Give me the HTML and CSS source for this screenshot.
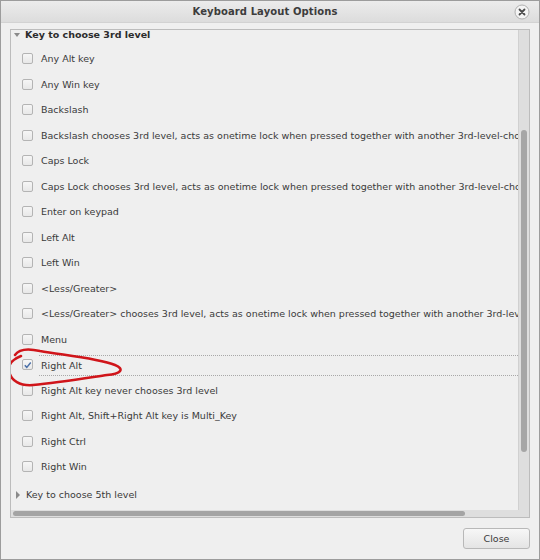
FILE: index.html
```html
<!DOCTYPE html>
<html>
<head>
<meta charset="utf-8">
<link rel="stylesheet" href="styles.css">
</head>
<body>
<div class="window">
  <div class="titlebar">
    <span class="title">Keyboard Layout Options</span>
    <span class="close-btn">
      <svg width="16" height="16" viewBox="0 0 16 16">
        <circle cx="8" cy="8" r="7" fill="#f4f4f4" stroke="#b0b0b0" stroke-width="1"/>
        <path d="M5.5 5.5 L10.5 10.5 M10.5 5.5 L5.5 10.5" stroke="#4a4a4a" stroke-width="1.8" stroke-linecap="round"/>
      </svg>
    </span>
  </div>
  <div class="body">
    <div class="frame">
      <div class="viewport">
        <div class="list">
          <div class="group-row first"><span class="tri-down"></span><span class="group-label">Key to choose 3rd level</span></div>
          <div class="row"><span class="cb"></span><span>Any Alt key</span></div>
          <div class="row"><span class="cb"></span><span>Any Win key</span></div>
          <div class="row"><span class="cb"></span><span>Backslash</span></div>
          <div class="row"><span class="cb"></span><span>Backslash chooses 3rd level, acts as onetime lock when pressed together with another 3rd-level-chooser</span></div>
          <div class="row"><span class="cb"></span><span>Caps Lock</span></div>
          <div class="row"><span class="cb"></span><span>Caps Lock chooses 3rd level, acts as onetime lock when pressed together with another 3rd-level-chooser</span></div>
          <div class="row"><span class="cb"></span><span>Enter on keypad</span></div>
          <div class="row"><span class="cb"></span><span>Left Alt</span></div>
          <div class="row"><span class="cb"></span><span>Left Win</span></div>
          <div class="row"><span class="cb"></span><span>&lt;Less/Greater&gt;</span></div>
          <div class="row"><span class="cb"></span><span>&lt;Less/Greater&gt; chooses 3rd level, acts as onetime lock when pressed together with another 3rd-level-chooser</span></div>
          <div class="row"><span class="cb"></span><span>Menu</span></div>
          <div class="row focused"><span class="cb checked"><svg width="10" height="10" viewBox="0 0 10 10"><path d="M2 5.2 L4.2 7.6 L8.6 2.2" fill="none" stroke="#4a6fa8" stroke-width="1.6"/></svg></span><span class="focus-label">Right Alt</span></div>
          <div class="row"><span class="cb"></span><span>Right Alt key never chooses 3rd level</span></div>
          <div class="row"><span class="cb"></span><span>Right Alt, Shift+Right Alt key is Multi_Key</span></div>
          <div class="row"><span class="cb"></span><span>Right Ctrl</span></div>
          <div class="row"><span class="cb"></span><span>Right Win</span></div>
          <div class="group-row collapsed"><span class="tri-right"></span><span class="group-label normal">Key to choose 5th level</span></div>
          <div class="group-row collapsed last"><span class="tri-right"></span><span class="group-label normal">Miscellaneous compatibility options</span></div>
        </div>
        <svg class="annot" width="130" height="44" viewBox="0 0 130 44">
          <path d="M8 9 C 12 3, 20 2, 33 5 C 55 9, 90 12, 108 19 C 118 23, 114 28, 100 29 C 80 32, 50 37, 26 39 C 13 40, 4 35, 2 25 C 1 18, 6 13, 14 10" fill="none" stroke="#d0151a" stroke-width="2.5" stroke-linecap="round"/>
        </svg>
      </div>
      <div class="vscroll"><div class="vthumb"></div></div>
      <div class="hscroll"><div class="hthumb"></div></div>
      <div class="corner"></div>
    </div>
    <div class="buttons">
      <button class="btn">Close</button>
    </div>
  </div>
</div>
</body>
</html>
```
FILE: styles.css
```css
html, body {
  margin: 0;
  padding: 0;
  background: #efefef;
}
.window {
  width: 540px;
  height: 560px;
  box-sizing: border-box;
  border: 1px solid #9c9c9c;
  background: #efefef;
  font-family: "DejaVu Sans", sans-serif;
  font-size: 9.5px;
  color: #3a3a3a;
  display: flex;
  flex-direction: column;
  overflow: hidden;
}
.titlebar {
  height: 21px;
  flex: none;
  background: linear-gradient(#ececec, #dcdcdc);
  border-bottom: 1px solid #d2d2d2;
  display: flex;
  align-items: center;
  justify-content: center;
  position: relative;
}
.title {
  font-weight: bold;
  font-size: 10px;
  color: #3c3c3c;
  letter-spacing: 0.1px;
  margin-right: 10px;
}
.close-btn {
  position: absolute;
  right: 9px;
  top: 3px;
  width: 16px;
  height: 16px;
}
.body {
  flex: 1;
  padding: 6px 9px 0 9px;
  display: flex;
  flex-direction: column;
}
.frame {
  height: 489px;
  box-sizing: border-box;
  border: 1px solid #bcbcbc;
  display: grid;
  grid-template-columns: 1fr 11px;
  grid-template-rows: 1fr 7px;
  background: #efefef;
}
.viewport {
  overflow: hidden;
  position: relative;
}
.list {
  margin-top: -7px;
}
.group-row {
  height: 25px;
  display: flex;
  align-items: center;
  padding-left: 3px;
  white-space: nowrap;
}
.group-row.first {
  height: 23px;
}
.group-row.collapsed {
  height: 30px;
}
.group-row.collapsed.last {
  height: 8px;
}
.group-label {
  font-weight: bold;
  color: #2c2c2c;
  margin-left: 5px;
}
.group-label.normal {
  font-weight: normal;
  color: #3a3a3a;
}
.tri-down {
  width: 0;
  height: 0;
  border-left: 3.5px solid transparent;
  border-right: 3.5px solid transparent;
  border-top: 4px solid #8a8a8a;
}
.tri-right {
  width: 0;
  height: 0;
  border-top: 4px solid transparent;
  border-bottom: 4px solid transparent;
  border-left: 4px solid #8a8a8a;
  margin-left: 2px;
  margin-right: 1px;
}
.row {
  height: 25.5px;
  display: flex;
  align-items: center;
  padding-left: 11px;
  white-space: nowrap;
}
.cb {
  width: 9px;
  height: 9px;
  border: 1px solid #b4b4b4;
  border-radius: 2px;
  background: linear-gradient(#f6f6f6, #e8e8e8);
  margin-right: 8px;
  flex: none;
  display: flex;
  align-items: center;
  justify-content: center;
}
.cb svg { display: block; }
.focus-label {
  flex: 1;
  align-self: stretch;
  display: flex;
  align-items: center;
  margin-left: -2px;
  padding-left: 2px;
  border-top: 1px dotted #a8a8a8;
  border-bottom: 1px dotted #a8a8a8;
  margin-top: 3px;
  margin-bottom: 2px;
}
.annot {
  position: absolute;
  left: -4px;
  top: 316px;
}
.vscroll {
  background: #dedede;
  border-left: 1px solid #d0d0d0;
  position: relative;
}
.vthumb {
  position: absolute;
  left: 2px;
  width: 6px;
  top: 100px;
  height: 322px;
  background: #a6a6a6;
  border-radius: 3px;
}
.hscroll {
  background: #dedede;
  position: relative;
}
.hthumb {
  position: absolute;
  left: 2px;
  top: 1px;
  height: 5px;
  width: 452px;
  background: #a4a4a4;
  border-radius: 3px;
}
.corner {
  background: #dedede;
}
.buttons {
  display: flex;
  justify-content: flex-end;
  padding-top: 10px;
}
.btn {
  width: 67px;
  height: 21px;
  font-family: "DejaVu Sans", sans-serif;
  font-size: 9.5px;
  color: #3a3a3a;
  background: linear-gradient(#f7f7f7, #e4e4e4);
  border: 1px solid #b8b8b8;
  border-radius: 3px;
  padding: 0;
}
```
